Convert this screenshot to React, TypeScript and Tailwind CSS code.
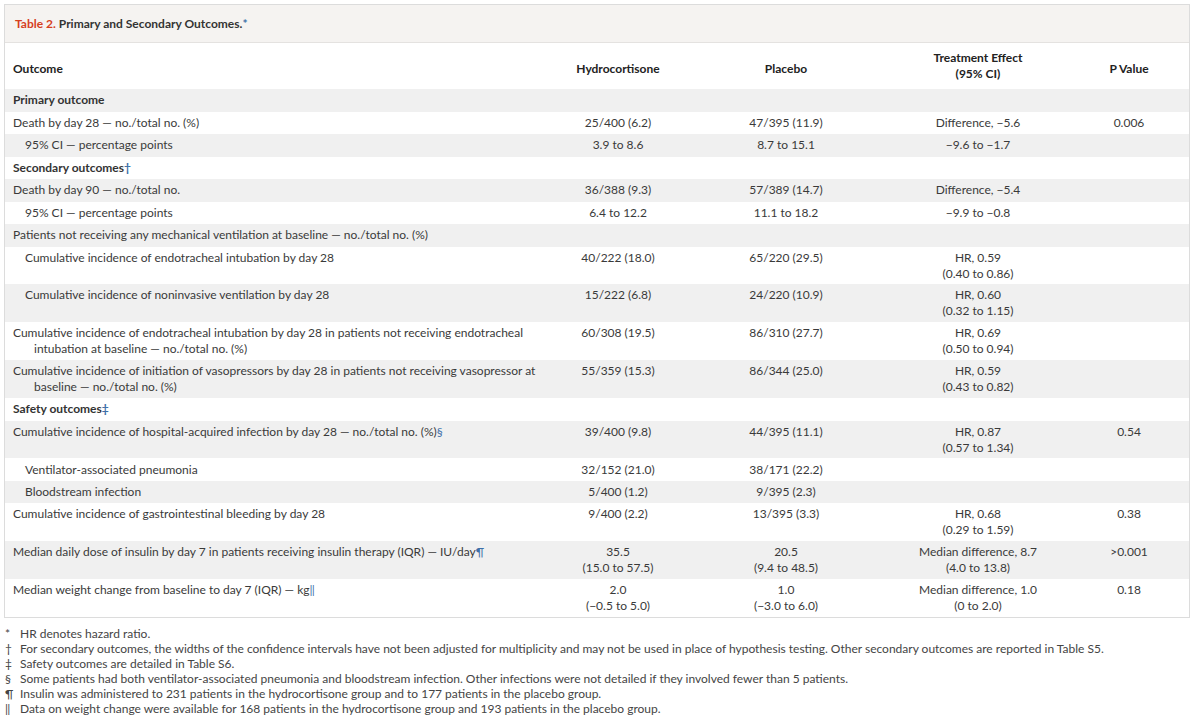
import React from "react";

const B = ({ c }: { c: string }) => <span className="text-[#3d6fa8]">{c}</span>;

type Row = {
  label: React.ReactNode;
  indent?: number;
  bold?: boolean;
  hanging?: boolean;
  double?: boolean;
  h?: [string, string?];
  p?: [string, string?];
  t?: [string, string?];
  pv?: string;
};

const rows: Row[] = [
  { label: "Primary outcome", bold: true },
  { label: "Death by day 28 — no./total no. (%)", h: ["25/400 (6.2)"], p: ["47/395 (11.9)"], t: ["Difference, −5.6"], pv: "0.006" },
  { label: "95% CI — percentage points", indent: 1, h: ["3.9 to 8.6"], p: ["8.7 to 15.1"], t: ["−9.6 to −1.7"] },
  { label: <>Secondary outcomes<B c="†" /></>, bold: true },
  { label: "Death by day 90 — no./total no.", h: ["36/388 (9.3)"], p: ["57/389 (14.7)"], t: ["Difference, −5.4"] },
  { label: "95% CI — percentage points", indent: 1, h: ["6.4 to 12.2"], p: ["11.1 to 18.2"], t: ["−9.9 to −0.8"] },
  { label: "Patients not receiving any mechanical ventilation at baseline — no./total no. (%)" },
  { label: "Cumulative incidence of endotracheal intubation by day 28", indent: 1, double: true, h: ["40/222 (18.0)"], p: ["65/220 (29.5)"], t: ["HR, 0.59", "(0.40 to 0.86)"] },
  { label: "Cumulative incidence of noninvasive ventilation by day 28", indent: 1, double: true, h: ["15/222 (6.8)"], p: ["24/220 (10.9)"], t: ["HR, 0.60", "(0.32 to 1.15)"] },
  { label: <>Cumulative incidence of endotracheal intubation by day 28 in patients not receiving endotracheal<br />intubation at baseline — no./total no. (%)</>, hanging: true, double: true, h: ["60/308 (19.5)"], p: ["86/310 (27.7)"], t: ["HR, 0.69", "(0.50 to 0.94)"] },
  { label: <>Cumulative incidence of initiation of vasopressors by day 28 in patients not receiving vasopressor at<br />baseline — no./total no. (%)</>, hanging: true, double: true, h: ["55/359 (15.3)"], p: ["86/344 (25.0)"], t: ["HR, 0.59", "(0.43 to 0.82)"] },
  { label: <>Safety outcomes<B c="‡" /></>, bold: true },
  { label: <>Cumulative incidence of hospital-acquired infection by day 28 — no./total no. (%)<B c="§" /></>, double: true, h: ["39/400 (9.8)"], p: ["44/395 (11.1)"], t: ["HR, 0.87", "(0.57 to 1.34)"], pv: "0.54" },
  { label: "Ventilator-associated pneumonia", indent: 1, h: ["32/152 (21.0)"], p: ["38/171 (22.2)"] },
  { label: "Bloodstream infection", indent: 1, h: ["5/400 (1.2)"], p: ["9/395 (2.3)"] },
  { label: "Cumulative incidence of gastrointestinal bleeding by day 28", double: true, h: ["9/400 (2.2)"], p: ["13/395 (3.3)"], t: ["HR, 0.68", "(0.29 to 1.59)"], pv: "0.38" },
  { label: <>Median daily dose of insulin by day 7 in patients receiving insulin therapy (IQR) — IU/day<B c="¶" /></>, double: true, h: ["35.5", "(15.0 to 57.5)"], p: ["20.5", "(9.4 to 48.5)"], t: ["Median difference, 8.7", "(4.0 to 13.8)"], pv: ">0.001" },
  { label: <>Median weight change from baseline to day 7 (IQR) — kg<B c="‖" /></>, double: true, h: ["2.0", "(−0.5 to 5.0)"], p: ["1.0", "(−3.0 to 6.0)"], t: ["Median difference, 1.0", "(0 to 2.0)"], pv: "0.18" },
];

const Cell = ({ v }: { v?: [string, string?] | string }) => {
  const a = typeof v === "string" ? [v] : v || [];
  return (
    <div className="flex flex-col items-center text-center">
      {a.map((x, i) => x && <div key={i}>{x}</div>)}
    </div>
  );
};

const grid = "grid grid-cols-[528px_170px_166px_218px_84px_20px]";

export default function App() {
  return (
    <div className="w-[1200px] h-[724px] bg-white text-[#3a3a3a] text-[12px] leading-[16px]" style={{ fontFamily: "Lato, 'Open Sans', sans-serif" }}>
      <div className="pt-[4px] pl-[4px] pr-[10px]">
        <div className="border border-[#dcdcdc]">
          <div className="h-[38px] bg-[#f5f3f1] border-b border-[#e4e2e0] flex items-center pl-[10px] font-bold text-[12px] text-[#333]">
            <span className="text-[#d6401f]">Table 2.</span>&nbsp;Primary and Secondary Outcomes.<B c="*" />
          </div>
          <div className={`${grid} h-[46px] items-center font-bold text-[#222]`}>
            <div className="pl-[8px] pt-[6px]">Outcome</div>
            <div className="text-center pt-[6px]">Hydrocortisone</div>
            <div className="text-center pt-[6px]">Placebo</div>
            <div className="text-center">Treatment Effect<br />(95% CI)</div>
            <div className="text-center pt-[6px]">P Value</div>
            <div />
          </div>
          {rows.map((r, i) => (
            <div
              key={i}
              className={`${grid} ${r.double ? "h-[37.9px] pt-[3px]" : "h-[22.5px] items-center"} ${i % 2 === 0 ? "bg-[#f0f0f0]" : "bg-white"} ${r.bold ? "font-bold text-[#333]" : ""}`}
            >
              <div
                className={r.hanging ? "pl-[29px] -indent-[21px] whitespace-nowrap" : r.indent ? "pl-[20px]" : "pl-[8px]"}
              >
                {r.label}
              </div>
              <Cell v={r.h} />
              <Cell v={r.p} />
              <Cell v={r.t} />
              <Cell v={r.pv} />
              <div />
            </div>
          ))}
        </div>
      </div>
      <div className="pt-[8px] pl-[5px] leading-[15px] text-[#444]">
        {[
          ["*", "HR denotes hazard ratio."],
          ["†", "For secondary outcomes, the widths of the confidence intervals have not been adjusted for multiplicity and may not be used in place of hypothesis testing. Other secondary outcomes are reported in Table S5."],
          ["‡", "Safety outcomes are detailed in Table S6."],
          ["§", "Some patients had both ventilator-associated pneumonia and bloodstream infection. Other infections were not detailed if they involved fewer than 5 patients."],
          ["¶", "Insulin was administered to 231 patients in the hydrocortisone group and to 177 patients in the placebo group."],
          ["‖", "Data on weight change were available for 168 patients in the hydrocortisone group and 193 patients in the placebo group."],
        ].map(([s, t]) => (
          <div key={s} className="flex">
            <span className="w-[15px] shrink-0">{s}</span>
            <span>{t}</span>
          </div>
        ))}
      </div>
    </div>
  );
}
